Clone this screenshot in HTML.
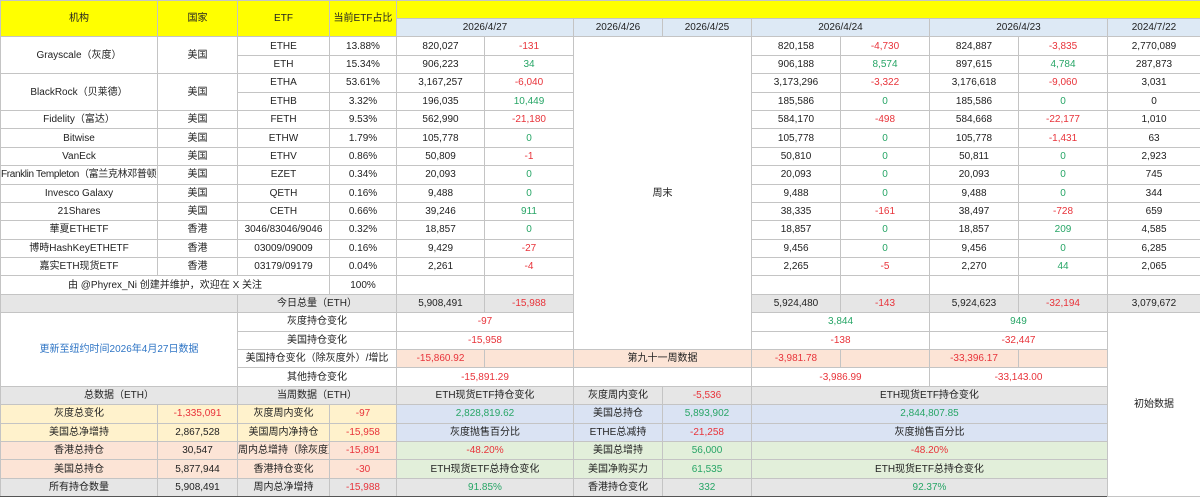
<!DOCTYPE html>
<html><head><meta charset="utf-8"><style>
html,body{margin:0;padding:0;background:#fff;width:1200px;height:499px;overflow:hidden}
table{border-collapse:collapse;table-layout:fixed;width:1200px;font-family:"Liberation Sans","Noto Sans CJK SC",sans-serif;font-size:10px;color:#222}
td{border:1px solid #c4c4c4;text-align:center;vertical-align:middle;padding:1px 0 0 0;white-space:nowrap;overflow:hidden;height:16.4px;line-height:12px}
.y{background:#ffff00}
.d{background:#dde9f5}
.g{background:#e6e6e6}
.p{background:#fce4d6}
.ly{background:#fff2cc}
.b{background:#dae3f3}
.gr{background:#e2efda}
.r{color:#e8333a}
.n{color:#27a566}
.bl{color:#2f75c5}
tr:last-child td{border-bottom:1px solid #555}
</style></head><body>
<table>
<colgroup><col style="width:157px"><col style="width:80px"><col style="width:92px"><col style="width:67px"><col style="width:88px"><col style="width:89px"><col style="width:89px"><col style="width:89px"><col style="width:89px"><col style="width:89px"><col style="width:89px"><col style="width:89px"><col style="width:93px"></colgroup>
<tr><td class="y" rowspan="2">机构</td><td class="y" rowspan="2">国家</td><td class="y" rowspan="2">ETF</td><td class="y" rowspan="2">当前ETF占比</td><td class="y" colspan="9" style="height:16px"></td></tr>
<tr><td class="d" colspan="2">2026/4/27</td><td class="d">2026/4/26</td><td class="d">2026/4/25</td><td class="d" colspan="2">2026/4/24</td><td class="d" colspan="2">2026/4/23</td><td class="d">2024/7/22</td></tr>
<tr><td rowspan="2">Grayscale（灰度）</td><td rowspan="2">美国</td><td>ETHE</td><td>13.88%</td><td>820,027</td><td class="r">-131</td><td colspan="2" rowspan="17">周末</td><td>820,158</td><td class="r">-4,730</td><td>824,887</td><td class="r">-3,835</td><td>2,770,089</td></tr>
<tr><td>ETH</td><td>15.34%</td><td>906,223</td><td class="n">34</td><td>906,188</td><td class="n">8,574</td><td>897,615</td><td class="n">4,784</td><td>287,873</td></tr>
<tr><td rowspan="2">BlackRock（贝莱德）</td><td rowspan="2">美国</td><td>ETHA</td><td>53.61%</td><td>3,167,257</td><td class="r">-6,040</td><td>3,173,296</td><td class="r">-3,322</td><td>3,176,618</td><td class="r">-9,060</td><td>3,031</td></tr>
<tr><td>ETHB</td><td>3.32%</td><td>196,035</td><td class="n">10,449</td><td>185,586</td><td class="n">0</td><td>185,586</td><td class="n">0</td><td>0</td></tr>
<tr><td>Fidelity（富达）</td><td>美国</td><td>FETH</td><td>9.53%</td><td>562,990</td><td class="r">-21,180</td><td>584,170</td><td class="r">-498</td><td>584,668</td><td class="r">-22,177</td><td>1,010</td></tr>
<tr><td>Bitwise</td><td>美国</td><td>ETHW</td><td>1.79%</td><td>105,778</td><td class="n">0</td><td>105,778</td><td class="n">0</td><td>105,778</td><td class="r">-1,431</td><td>63</td></tr>
<tr><td>VanEck</td><td>美国</td><td>ETHV</td><td>0.86%</td><td>50,809</td><td class="r">-1</td><td>50,810</td><td class="n">0</td><td>50,811</td><td class="n">0</td><td>2,923</td></tr>
<tr><td style="letter-spacing:-0.35px">Franklin Templeton（富兰克林邓普顿）</td><td>美国</td><td>EZET</td><td>0.34%</td><td>20,093</td><td class="n">0</td><td>20,093</td><td class="n">0</td><td>20,093</td><td class="n">0</td><td>745</td></tr>
<tr><td>Invesco Galaxy</td><td>美国</td><td>QETH</td><td>0.16%</td><td>9,488</td><td class="n">0</td><td>9,488</td><td class="n">0</td><td>9,488</td><td class="n">0</td><td>344</td></tr>
<tr><td>21Shares</td><td>美国</td><td>CETH</td><td>0.66%</td><td>39,246</td><td class="n">911</td><td>38,335</td><td class="r">-161</td><td>38,497</td><td class="r">-728</td><td>659</td></tr>
<tr><td>華夏ETHETF</td><td>香港</td><td>3046/83046/9046</td><td>0.32%</td><td>18,857</td><td class="n">0</td><td>18,857</td><td class="n">0</td><td>18,857</td><td class="n">209</td><td>4,585</td></tr>
<tr><td>博時HashKeyETHETF</td><td>香港</td><td>03009/09009</td><td>0.16%</td><td>9,429</td><td class="r">-27</td><td>9,456</td><td class="n">0</td><td>9,456</td><td class="n">0</td><td>6,285</td></tr>
<tr><td>嘉实ETH现货ETF</td><td>香港</td><td>03179/09179</td><td>0.04%</td><td>2,261</td><td class="r">-4</td><td>2,265</td><td class="r">-5</td><td>2,270</td><td class="n">44</td><td>2,065</td></tr>
<tr><td colspan="3">由 @Phyrex_Ni 创建并维护，欢迎在 X 关注</td><td>100%</td><td></td><td></td><td></td><td></td><td></td><td></td><td></td></tr>
<tr><td class="g" colspan="2"></td><td class="g" colspan="2">今日总量（ETH）</td><td class="g">5,908,491</td><td class="g r">-15,988</td><td class="g">5,924,480</td><td class="g r">-143</td><td class="g">5,924,623</td><td class="g r">-32,194</td><td class="g">3,079,672</td></tr>
<tr><td colspan="2" rowspan="4" class="bl">更新至纽约时间2026年4月27日数据</td><td colspan="2">灰度持仓变化</td><td colspan="2" class="r">-97</td><td colspan="2" class="n">3,844</td><td colspan="2" class="n">949</td><td rowspan="10">初始数据</td></tr>
<tr><td colspan="2">美国持仓变化</td><td colspan="2" class="r">-15,958</td><td colspan="2" class="r">-138</td><td colspan="2" class="r">-32,447</td></tr>
<tr><td colspan="2">美国持仓变化（除灰度外）/增比</td><td class="p r">-15,860.92</td><td class="p"></td><td colspan="2" class="p">第九十一周数据</td><td class="p r">-3,981.78</td><td class="p"></td><td class="p r">-33,396.17</td><td class="p"></td></tr>
<tr><td colspan="2">其他持仓变化</td><td colspan="2" class="r">-15,891.29</td><td colspan="2"></td><td colspan="2" class="r">-3,986.99</td><td colspan="2" class="r">-33,143.00</td></tr>
<tr><td colspan="2" class="g">总数据（ETH）</td><td colspan="2" class="g">当周数据（ETH）</td><td colspan="2" class="g">ETH现货ETF持仓变化</td><td class="g">灰度周内变化</td><td class="g r">-5,536</td><td colspan="4" class="g">ETH现货ETF持仓变化</td></tr>
<tr><td class="ly">灰度总变化</td><td class="ly r">-1,335,091</td><td class="ly">灰度周内变化</td><td class="ly r">-97</td><td colspan="2" class="b n">2,828,819.62</td><td class="b">美国总持仓</td><td class="b n">5,893,902</td><td colspan="4" class="b n">2,844,807.85</td></tr>
<tr><td class="ly">美国总净增持</td><td class="ly">2,867,528</td><td class="ly">美国周内净持仓</td><td class="ly r">-15,958</td><td colspan="2" class="b">灰度抛售百分比</td><td class="b">ETHE总减持</td><td class="b r">-21,258</td><td colspan="4" class="b">灰度抛售百分比</td></tr>
<tr><td class="p">香港总持仓</td><td class="p">30,547</td><td class="p">周内总增持（除灰度）</td><td class="p r">-15,891</td><td colspan="2" class="gr r">-48.20%</td><td class="gr">美国总增持</td><td class="gr n">56,000</td><td colspan="4" class="gr r">-48.20%</td></tr>
<tr><td class="p">美国总持仓</td><td class="p">5,877,944</td><td class="p">香港持仓变化</td><td class="p r">-30</td><td colspan="2" class="gr">ETH现货ETF总持仓变化</td><td class="gr">美国净购买力</td><td class="gr n">61,535</td><td colspan="4" class="gr">ETH现货ETF总持仓变化</td></tr>
<tr><td class="g">所有持仓数量</td><td class="g">5,908,491</td><td class="g">周内总净增持</td><td class="g r">-15,988</td><td colspan="2" class="g n">91.85%</td><td class="g">香港持仓变化</td><td class="g n">332</td><td colspan="4" class="g n">92.37%</td></tr>
</table>
</body></html>
